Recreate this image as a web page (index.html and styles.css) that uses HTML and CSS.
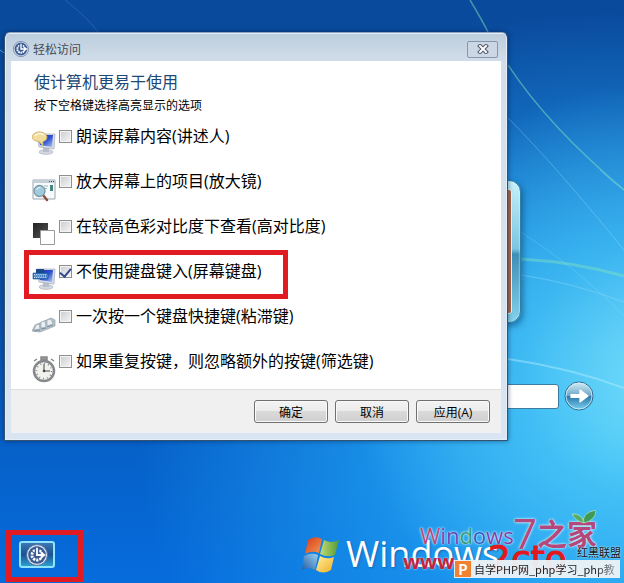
FILE: index.html
```html
<!DOCTYPE html>
<html lang="zh-CN">

<head>
  <meta charset="UTF-8" />
  <meta name="viewport" content="width=device-width, initial-scale=1.0" />
  <title>轻松访问</title>
  <link rel="stylesheet" href="styles.css">
</head>

<body>
  <!-- shared symbols -->
  <svg class="defs" width="0" height="0" aria-hidden="true">
    <defs>
      <linearGradient id="screen" x1="0" y1="0" x2="1" y2="1">
        <stop offset="0" stop-color="#1b2fa8" />
        <stop offset="0.5" stop-color="#2c50cf" />
        <stop offset="1" stop-color="#a9c8f4" />
      </linearGradient>
      <linearGradient id="dark" x1="0" y1="0" x2="1" y2="1">
        <stop offset="0" stop-color="#222" />
        <stop offset="1" stop-color="#555" />
      </linearGradient>
      <linearGradient id="ball" x1="0" y1="0" x2="0" y2="1">
        <stop offset="0" stop-color="#d5edf6" />
        <stop offset="0.48" stop-color="#6fa9c9" />
        <stop offset="0.52" stop-color="#2c79ab" />
        <stop offset="1" stop-color="#7bd3f2" />
      </linearGradient>
      <symbol id="ease" viewBox="0 0 24 24">
        <circle cx="12" cy="12" r="11.400" fill="#dfe7f2" stroke="#56719c" stroke-width="1" />
        <circle cx="12" cy="12" r="9.600" fill="#3a5c93" />
        <circle cx="12" cy="12" r="5.500" fill="none" stroke="#fff" stroke-width="3" stroke-dasharray="2.400 1.055" />
        <path d="M12 3v9h9" fill="none" stroke="#3a5c93" stroke-width="5" />
        <path d="M12 4v8h7M16 9l4 3-4 3" fill="none" stroke="#fff" stroke-width="2" />
      </symbol>
      <symbol id="monitor" viewBox="0 0 24 28">
        <ellipse cx="14" cy="22" rx="7" ry="2.400" fill="#d3d7df" stroke="#a9afba" stroke-width="0.600" />
        <path d="M11 17h6v5h-6z" fill="#b9bfca" />
        <path d="M5 4l18 0-1 15L7 17z" fill="#d8dde6" stroke="#a3abba" stroke-width="0.700" />
        <path d="M6 5l15 0-1 12L8 15z" fill="url(#screen)" />
      </symbol>
    </defs>
  </svg>

  <main class="desktop">
    <svg class="wallpaper" viewBox="0 0 624 583" preserveAspectRatio="none" fill="none" aria-hidden="true">
      <g stroke="#7fe3c0" stroke-width="1.500">
        <path d="M470 0Q482 20 488 32" opacity="0.500" />
        <path d="M508 65Q548 126 624 190" opacity="0.500" />
        <path d="M521 259Q575 262 624 276" stroke-width="3" opacity="0.450" />
      </g>
      <g stroke="#b4efff">
        <path d="M508 118Q555 165 624 250" opacity="0.300" />
        <path d="M600 170Q612 182 624 190" opacity="0.250" />
        <path d="M521 275Q570 282 624 302" opacity="0.300" />
        <path d="M521 232Q580 270 624 316" opacity="0.200" />
        <path d="M508 359Q570 368 624 388" stroke-width="2" opacity="0.450" />
        <path d="M0 50Q8 54 12 62" opacity="0.500" />
        <path d="M65 0Q88 18 98 32" opacity="0.150" />
      </g>
    </svg>

    <form class="login">
      <div class="user-tile"><div class="user-photo"></div></div>
      <input class="password" type="password" aria-label="密码">
      <button class="go" type="button" aria-label="登录">
        <svg viewBox="0 0 30 30">
          <circle cx="15" cy="15" r="14" fill="url(#ball)" stroke="#2b6a94" />
          <circle cx="15" cy="15" r="13" fill="none" stroke="#d8f2fb" stroke-width="0.800" />
          <path d="M7 13.500h9V9l8 6-8 6v-4.500H7z" fill="#fff" stroke="#fff" stroke-width="1.200" stroke-linejoin="round" />
        </svg>
      </button>
    </form>

    <form class="dialog" role="dialog" aria-labelledby="dialog-title">
      <header class="titlebar">
        <svg class="title-icon"><use href="#ease" /></svg>
        <span id="dialog-title">轻松访问</span>
        <button class="close" type="button" aria-label="关闭">
          <svg viewBox="0 0 12 10">
            <path d="M3 2l6 6M9 2L3 8" stroke="#4d5566" stroke-width="4" stroke-linecap="square" />
            <path d="M3 2l6 6M9 2L3 8" stroke="#fff" stroke-width="2" stroke-linecap="square" />
          </svg>
        </button>
      </header>

      <section class="content">
        <h1>使计算机更易于使用</h1>
        <p>按下空格键选择高亮显示的选项</p>
        <ul class="options">
          <li>
            <svg class="icon" viewBox="0 0 24 28">
              <use href="#monitor" />
              <path d="M7 2c4 0 8 2 8 5s-2 4-4 4.500V16l-4-4.500C3 11.500 0 9 0 7s3-5 7-5z" fill="#f1dc9c" stroke="#c4a457" stroke-width="0.800" />
              <path d="M3 6c2-3 6-3 9-1" fill="none" stroke="#fffbe6" stroke-width="1.500" />
            </svg>
            <input type="checkbox" id="narrator">
            <label for="narrator">朗读屏幕内容(讲述人)</label>
          </li>
          <li>
            <svg class="icon" viewBox="0 0 24 28">
              <path d="M1 5h22v19H1z" fill="#f7fafb" stroke="#9aa7b0" />
              <path d="M1 5h22v3H1z" fill="#c3d0d8" />
              <path d="M17 6.500h5" stroke="#456" stroke-dasharray="1 1" />
              <path d="M12 11h4M12 13.500h3M4 21h5" stroke="#9bb" />
              <path d="M18 10h3v6h-3z" fill="#46877f" />
              <path d="M11 20l4 5" stroke="#8a5140" stroke-width="2.500" stroke-linecap="round" />
              <circle cx="7.500" cy="16" r="5.500" fill="#9fcbdc" stroke="#7797a6" stroke-width="1.300" />
              <path d="M4.500 15q1-3 4-2.500" fill="none" stroke="#e8f8ff" />
            </svg>
            <input type="checkbox" id="magnifier">
            <label for="magnifier">放大屏幕上的项目(放大镜)</label>
          </li>
          <li>
            <svg class="icon" viewBox="0 0 24 28">
              <path d="M1 3h15v15H1z" fill="url(#dark)" />
              <path d="M8.500 10.500h14v14h-14z" fill="#fff" stroke="#999" />
            </svg>
            <input type="checkbox" id="contrast">
            <label for="contrast">在较高色彩对比度下查看(高对比度)</label>
          </li>
          <li class="marked">
            <svg class="icon" viewBox="0 0 24 28">
              <use href="#monitor" />
              <path d="M4 4h8v4H4z" fill="#174a86" />
              <path d="M1 8h15v6H1z" fill="#3273bd" stroke="#1c5398" stroke-width="0.600" />
              <path d="M2 9.500h13M2.500 11h13M2 12.500h13" stroke="#e2f2ff" stroke-width="0.900" stroke-dasharray="1.200 0.900" />
            </svg>
            <input type="checkbox" id="osk" checked>
            <label for="osk">不使用键盘键入(屏幕键盘)</label>
          </li>
          <li>
            <svg class="icon" viewBox="0 0 24 28">
              <path d="M0 21l3-6 16-7 4 2v6L8 22z" fill="#b3c0ca" stroke="#93a1ac" stroke-width="0.700" />
              <g fill="#e8eef2" stroke="#93a1ac" stroke-width="0.600">
                <path d="M2 20l2-5 3-1 1 5zM9 18l0-6 4-1 1 6zM15 16l0-6 4-1 2 5z" />
              </g>
              <path d="M2 21l6-1M9 19l5-1M15 17l6-2" stroke="#7d8f9c" />
            </svg>
            <input type="checkbox" id="sticky">
            <label for="sticky">一次按一个键盘快捷键(粘滞键)</label>
          </li>
          <li>
            <svg class="icon" viewBox="0 0 24 28">
              <path d="M9 2h6v3H9zM2 6l3-2M22 6l-3-2" fill="#999" stroke="#888" stroke-width="1.500" />
              <circle cx="12" cy="16" r="10" fill="#f1f1ee" stroke="#85898c" stroke-width="2.500" />
              <circle cx="12" cy="16" r="7.500" fill="none" stroke="#777" stroke-width="1.400" stroke-dasharray="0.900 3.027" />
              <path d="M12 9v7h6" fill="none" stroke="#444" />
              <circle cx="12" cy="16" r="1.300" fill="#444" />
            </svg>
            <input type="checkbox" id="filter">
            <label for="filter">如果重复按键，则忽略额外的按键(筛选键)</label>
          </li>
        </ul>
      </section>

      <footer class="actions">
        <button type="button">确定</button>
        <button type="button">取消</button>
        <button type="button">应用(A)</button>
      </footer>
    </form>

    <div class="ease-frame">
      <button class="ease-button" type="button" aria-label="轻松访问">
        <svg><use href="#ease" /></svg>
      </button>
    </div>

    <div class="branding">
      <svg class="flag" viewBox="0 0 38 38">
        <defs>
          <linearGradient id="red" x1="0" y1="0" x2="1" y2="1"><stop stop-color="#d63a18" /><stop offset="1" stop-color="#f39a57" /></linearGradient>
          <linearGradient id="green" x1="0" y1="0" x2="1" y2="0"><stop stop-color="#c4da72" /><stop offset="1" stop-color="#4f9a38" /></linearGradient>
          <linearGradient id="blue" x1="0" y1="1" x2="1" y2="0"><stop stop-color="#245ea8" /><stop offset="1" stop-color="#9bd2f0" /></linearGradient>
          <linearGradient id="yellow" x1="0" y1="0" x2="1" y2="1"><stop stop-color="#fff0a0" /><stop offset="1" stop-color="#f0ae25" /></linearGradient>
        </defs>
        <path d="M6 4Q13-1 20 3L17 17Q10 14 3 18z" fill="url(#red)" />
        <path d="M22 4Q29 8 37 4L33 19Q26 22 18 18z" fill="url(#green)" />
        <path d="M2 20Q9 16 16 19L13 34Q6 30 0 34z" fill="url(#blue)" />
        <path d="M18 20Q25 24 32 21L29 34Q21 39 14 34z" fill="url(#yellow)" />
      </svg>
      <span class="brand-name">Windows</span>
      <span class="brand-www">www.</span>
      <span class="brand-site"><i>W</i><i>in</i><i>d</i><i>o</i><i>ws</i></span>
      <span class="brand-seven">7</span>
      <span class="brand-home">之家</span>
      <svg class="leaf" viewBox="0 0 24 14">
        <path d="M12 13Q10 3 0 4q3 7 12 9z" fill="#55ad68" stroke="#b6e6c2" stroke-width="0.700" />
        <path d="M12 13Q9 3 24 0q0 10-12 13z" fill="#3f9a55" stroke="#b6e6c2" stroke-width="0.700" />
      </svg>
      <span class="brand-cto">2cto</span>
      <span class="brand-union">红黑联盟</span>
      <div class="caption"><b>P</b><span>自学PHP网_php学习_php教</span></div>
    </div>
  </main>
</body>

</html>
```

FILE: styles.css
```css
* {
  box-sizing: border-box;
}

body {
  margin: 0;
  font-family: "Open Sans", "Noto Sans CJK SC", sans-serif;
  font-size: 12px;
  color: #000;
}

.defs {
  position: absolute;
}

.desktop {
  position: relative;
  display: flex;
  flex-direction: column;
  min-height: 100vh;
  padding: 32px 116px 1px 4px;
  overflow: hidden;
  background:
    radial-gradient(ellipse 50% 50% at 106% 64%, rgba(124, 226, 251, 0.9) 0%, rgba(78, 202, 247, 0.6) 45%, transparent 100%),
    radial-gradient(ellipse 76% 72% at 98% 74%, #35b9f5 0%, rgba(32, 160, 242, 0.8) 45%, transparent 100%),
    linear-gradient(to bottom, #0a4a9c 0%, #0b4fa8 50%, #0660c8 76%, #066cdc 100%);
}

.wallpaper {
  position: absolute;
  inset: 0;
  width: 100%;
  height: 100%;
}

/* log-on screen behind the dialog */
.user-tile {
  position: absolute;
  top: 180px;
  right: 103px;
  width: 142px;
  height: 143px;
  padding: 8px;
  border: 1px solid #2f7fa6;
  border-radius: 12px;
  background: linear-gradient(to bottom, #c5f1fb 0%, #7cc6e2 48%, #3d8fb8 52%, #83d3ec 100%);
  box-shadow: inset 0 0 2px #fff, 2px 3px 6px rgba(0, 50, 90, 0.5);
}

.user-photo {
  height: 100%;
  border: 1px solid #e9fbff;
  border-radius: 3px;
  background: #a8684a;
}

.password {
  position: absolute;
  top: 384px;
  right: 65px;
  width: 225px;
  height: 25px;
  border: 1px solid #3c7c9c;
  border-radius: 3px;
  background: #fff;
}

.go {
  position: absolute;
  top: 381px;
  right: 30px;
  width: 30px;
  height: 30px;
  padding: 0;
  border: 0;
  border-radius: 50%;
  background: none;
}

.go svg {
  display: block;
}

/* dialog window */
.dialog {
  position: relative;
  padding: 0 6px 7px;
  border: 1px solid #34536f;
  border-top-color: #8ea6bd;
  border-radius: 6px 6px 0 0;
  background: linear-gradient(to bottom, #bccddd 0, #d3deea 30px, #d9e5f2 100%);
  box-shadow: inset 0 0 0 1px #e4eef8, 0 0 5px rgba(0, 20, 60, 0.5);
}

.titlebar {
  display: flex;
  align-items: center;
  gap: 4px;
  height: 28px;
  padding: 4px 3px 0 2px;
  color: #444c58;
}

.title-icon {
  width: 16px;
  height: 16px;
}

.close {
  display: flex;
  align-items: center;
  justify-content: center;
  width: 31px;
  height: 17px;
  margin-left: auto;
  padding: 0;
  border: 1px solid #8995aa;
  border-radius: 2px;
  background: #cbd7e5;
}

.close svg {
  width: 12px;
  height: 10px;
}

.content {
  padding: 9px 23px 6px 21px;
  background: #fff;
}

.content h1 {
  margin: 0 0 0 2px;
  font-size: 16px;
  font-weight: 400;
  line-height: 24px;
  color: #1b4a78;
}

.content p {
  margin: 3px 0 9px 2px;
  line-height: 18px;
}

.options {
  display: flex;
  flex-direction: column;
  align-items: flex-start;
  gap: 11px;
  margin: 0;
  padding: 0;
  list-style: none;
}

.options li {
  position: relative;
  display: flex;
  align-items: flex-start;
  font-size: 16px;
  line-height: 24px;
}

.icon {
  width: 24px;
  height: 28px;
  margin: 6px 3px 0 0;
}

.options input {
  appearance: none;
  display: grid;
  place-items: center;
  width: 13px;
  height: 13px;
  margin: 6px 4px 0 0;
  border: 1px solid #8e8f8f;
  background: linear-gradient(135deg, #c9ccd0, #f6f6f6);
  box-shadow: inset 0 0 0 1px #f4f4f4;
}

.options input:checked::after {
  content: "";
  width: 5px;
  height: 9px;
  margin-bottom: 2px;
  border: solid #31478a;
  border-width: 0 2px 2px 0;
  transform: rotate(40deg);
}

/* red frame around the highlighted option */
.marked::after {
  content: "";
  position: absolute;
  inset: -9px -27px -6px -8px;
  border: 5px solid #e01b22;
  pointer-events: none;
}

.actions {
  display: flex;
  justify-content: flex-end;
  gap: 7px;
  padding: 10px 11px;
  border-top: 1px solid #dfdfdf;
  background: #f0f0f0;
}

.actions button {
  width: 74px;
  height: 23px;
  padding: 0;
  border: 1px solid #707070;
  border-radius: 3px;
  background: linear-gradient(to bottom, #f3f3f3 0%, #ebebeb 50%, #dadada 50%, #cfcfcf 100%);
  box-shadow: inset 0 0 0 1px #fafafa;
  font: inherit;
}

/* ease of access button */
.ease-frame {
  position: relative;
  width: 77px;
  margin: auto 0 0 2px;
  padding: 6px 8px 9px;
  border: 5px solid #e01b22;
}

.ease-button {
  display: flex;
  align-items: center;
  justify-content: center;
  width: 36px;
  height: 27px;
  padding: 0;
  border: 2px solid #8fe4fb;
  border-radius: 3px;
  background: linear-gradient(to bottom, #3a78b4 0%, #1c5292 50%, #2b9fd0 100%);
}

.ease-button svg {
  width: 22px;
  height: 22px;
}

/* logo and overlapping marks, bottom right */
.branding {
  position: absolute;
  right: 0;
  bottom: 0;
  width: 324px;
  height: 78px;
  white-space: nowrap;
}

.branding > * {
  position: absolute;
}

.flag {
  left: 2px;
  top: 31px;
  width: 38px;
  height: 38px;
}

.brand-name {
  left: 46px;
  top: 25px;
  font-size: 36px;
  line-height: 48px;
  color: #fff;
  text-shadow: 1px 1px 2px #1469b8;
}

.brand-www {
  left: 103px;
  top: 45px;
  font-size: 20px;
  font-weight: 700;
  line-height: 24px;
  color: #c3233c;
  text-shadow: 0 0 2px #fff;
}

.brand-site,
.brand-seven,
.brand-home {
  color: #b3487c;
  text-shadow: 0 0 1px #fff, 0 0 3px #dff;
}

.brand-site {
  left: 120px;
  top: 16px;
  font-size: 22px;
  line-height: 28px;
}

.brand-site i {
  font-style: normal;
}

.brand-site i:nth-child(2) {
  color: #5c48b4;
}

.brand-site i:nth-child(3) {
  color: #2f9c74;
}

.brand-site i:nth-child(4) {
  color: #2a5cc4;
}

.brand-site i:nth-child(5) {
  color: #7a3fae;
}

.brand-seven {
  left: 213px;
  top: 4px;
  font-size: 42px;
  line-height: 48px;
}

.brand-home {
  left: 237px;
  top: 11px;
  font-size: 30px;
  font-weight: 700;
  line-height: 36px;
}

.leaf {
  left: 272px;
  top: 5px;
  width: 24px;
  height: 14px;
}

.brand-cto {
  left: 188px;
  top: 30px;
  font-family: "DejaVu Sans", sans-serif;
  font-size: 36px;
  font-weight: 400;
  line-height: 48px;
  color: #e3181c;
  -webkit-text-stroke: 1px #e3181c;
}

.brand-union {
  right: 3px;
  top: 39px;
  font-size: 11px;
  line-height: 18px;
  color: #111;
  text-shadow: 0 0 2px #fff;
}

.caption {
  right: 4px;
  bottom: 5px;
  display: flex;
  align-items: center;
  gap: 3px;
  width: 166px;
  height: 18px;
  padding-left: 1px;
  background: rgba(238, 242, 246, 0.95);
  font-family: "Noto Sans CJK SC", sans-serif;
  font-size: 11px;
  line-height: 18px;
  color: #222;
}

.caption b {
  flex: none;
  width: 16px;
  background: #f08232;
  font-size: 14px;
  line-height: 16px;
  text-align: center;
  color: #fff;
}

.caption span {
  mask-image: linear-gradient(to right, #000 85%, rgba(0, 0, 0, 0.4) 100%);
}
```
